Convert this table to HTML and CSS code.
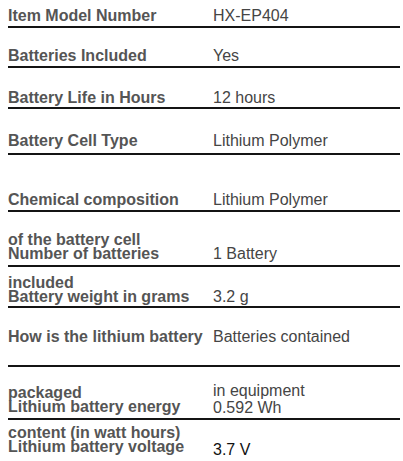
FILE: index.html
```html
<!DOCTYPE html>
<html>
<head>
<meta charset="utf-8">
<link rel="stylesheet" href="styles.css">
</head>
<body>
<div class="table">
  <div class="row r1">
    <div class="label">Item Model Number</div>
    <div class="value">HX-EP404</div>
  </div>
  <div class="row r2">
    <div class="label">Batteries Included</div>
    <div class="value">Yes</div>
  </div>
  <div class="row r3">
    <div class="label">Battery Life in Hours</div>
    <div class="value">12 hours</div>
  </div>
  <div class="row r4">
    <div class="label">Battery Cell Type</div>
    <div class="value">Lithium Polymer</div>
  </div>
  <div class="row r5">
    <div class="label">Chemical composition</div>
    <div class="value">Lithium Polymer</div>
  </div>
  <div class="row r6">
    <div class="label stack">of the battery cell<br>Number of batteries</div>
    <div class="value">1 Battery</div>
  </div>
  <div class="row r7">
    <div class="label stack">included<br>Battery weight in grams</div>
    <div class="value">3.2 g</div>
  </div>
  <div class="row r8">
    <div class="label">How is the lithium battery</div>
    <div class="value">Batteries contained</div>
  </div>
  <div class="row r9">
    <div class="label stack">packaged<br>Lithium battery energy</div>
    <div class="value vstack">in equipment<br>0.592 Wh</div>
  </div>
  <div class="row r10">
    <div class="label stack">content (in watt hours)<br>Lithium battery voltage</div>
    <div class="value dark">3.7 V</div>
  </div>
</div>
</body>
</html>
```
FILE: styles.css
```css
html, body {
  margin: 0;
  padding: 0;
  background: #ffffff;
}
body {
  font-family: "Liberation Sans", Arial, sans-serif;
  font-size: 16px;
  width: 403px;
  height: 461px;
  overflow: hidden;
}
.table {
  padding: 0 3px 0 8px;
}
.row {
  display: flex;
  align-items: flex-start;
  border-bottom: 2px solid #141414;
  box-sizing: content-box;
}
.label {
  width: 205px;
  flex: none;
  font-weight: bold;
  color: #555555;
  line-height: 18px;
  white-space: nowrap;
}
.value {
  flex: 1;
  color: #454545;
  line-height: 18px;
  white-space: nowrap;
}
.label.stack { line-height: 14px; }
.value.vstack { line-height: 17px; }
.value.dark { color: #111111; }

.r1 { height: 26px; }
.r1 .label, .r1 .value { padding-top: 7px; }
.r2 { height: 38px; }
.r2 .label, .r2 .value { padding-top: 18.5px; }
.r3 { height: 39px; }
.r3 .label, .r3 .value { padding-top: 20.5px; }
.r4 { height: 44px; }
.r4 .label, .r4 .value { padding-top: 23px; }
.r5 { height: 55px; }
.r5 .label, .r5 .value { padding-top: 36px; }
.r6 { height: 53px; }
.r6 .label { padding-top: 21px; }
.r6 .value { padding-top: 33px; }
.r7 { height: 39px; }
.r7 .label { padding-top: 8.5px; }
.r7 .value { padding-top: 20.5px; }
.r8 { height: 57px; }
.r8 .label, .r8 .value { padding-top: 19.5px; }
.r9 { height: 51px; }
.r9 .label { padding-top: 19px; }
.r9 .value { padding-top: 15px; }
.r10 { height: 60px; border-bottom: none; }
.r10 .label { padding-top: 5.5px; }
.r10 .value { padding-top: 20.5px; }
```
